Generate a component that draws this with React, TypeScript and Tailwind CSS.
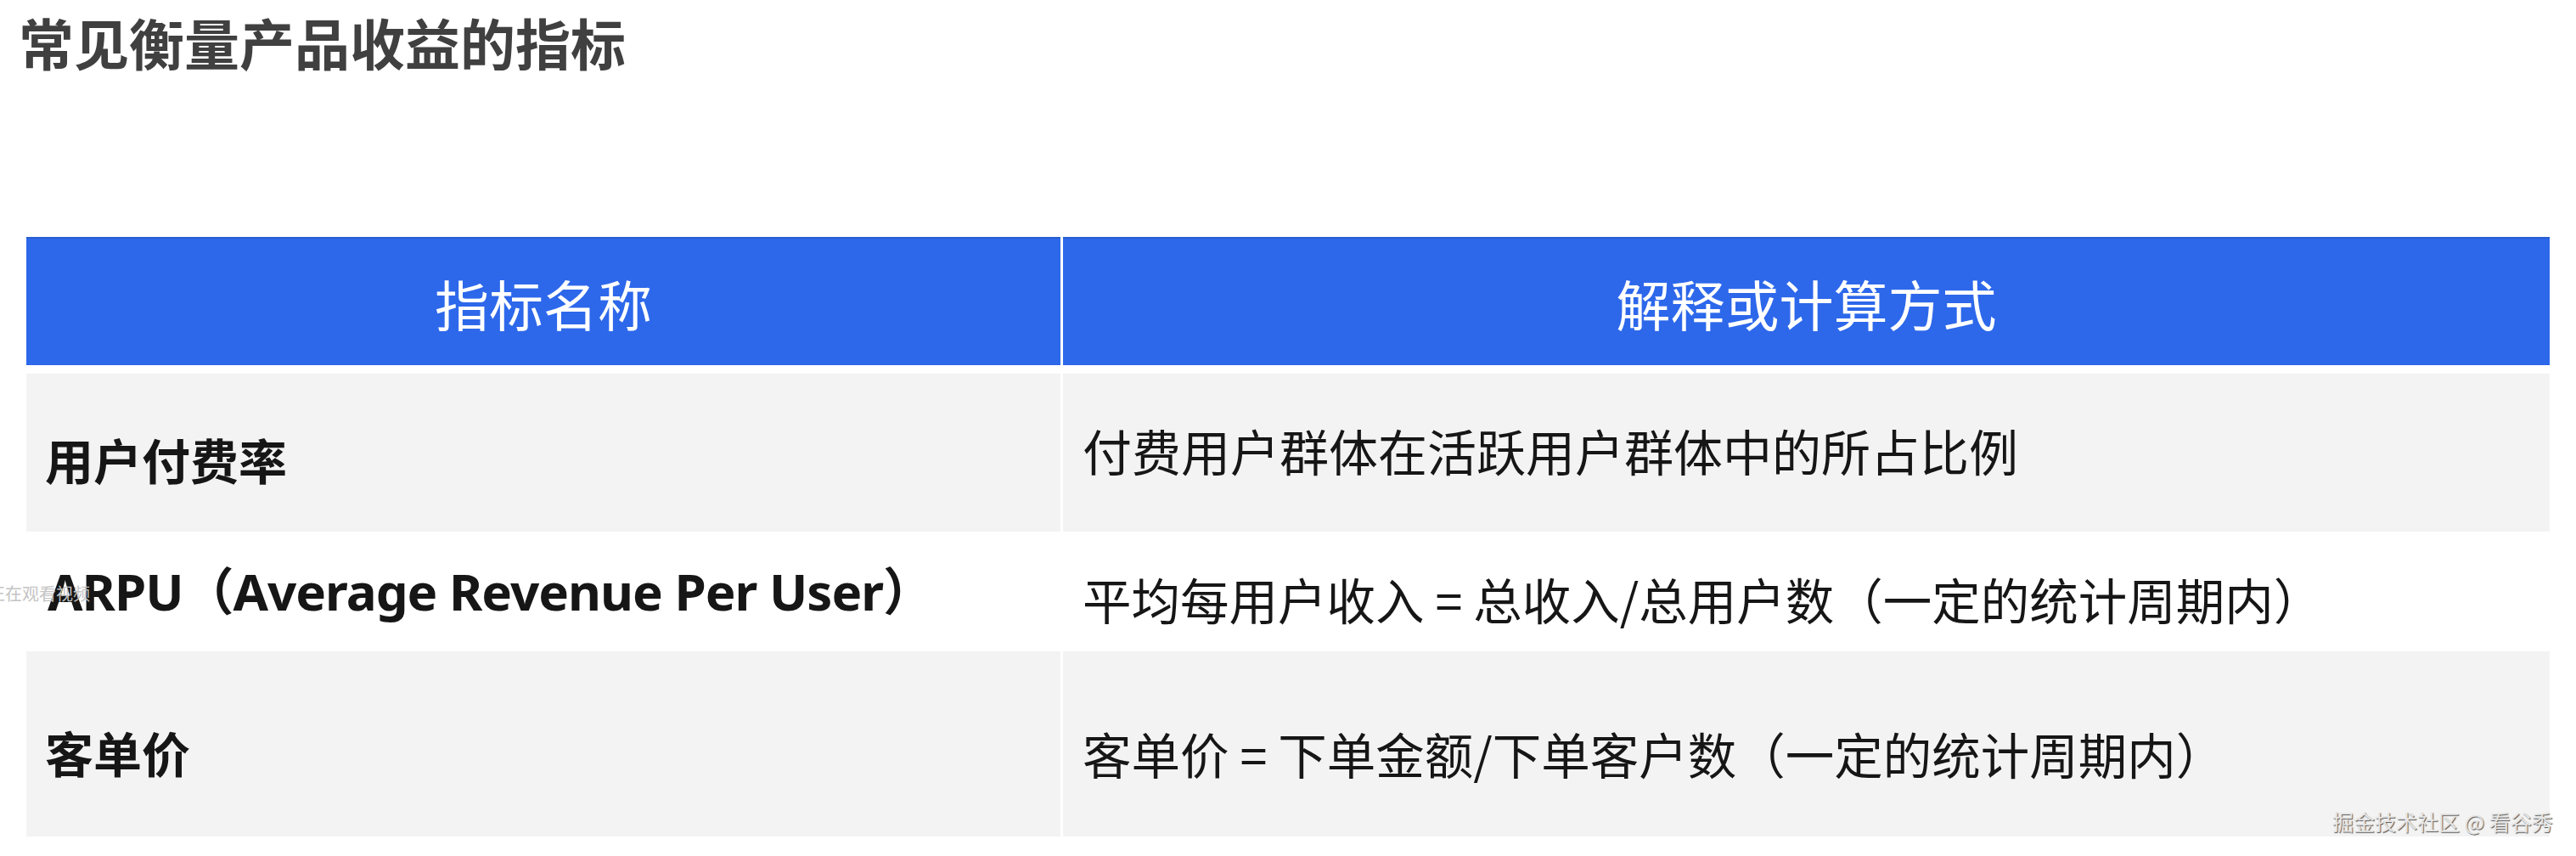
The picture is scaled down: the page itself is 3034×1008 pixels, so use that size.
const cjk = '"Noto Sans CJK SC", sans-serif';

type Row = {
  name: string;
  desc: string;
  bg: string;
  h: string;
  namePt: string;
  descPt: string;
  latin?: boolean;
};

const rows: Row[] = [
  {
    name: "用户付费率",
    desc: "付费用户群体在活跃用户群体中的所占比例",
    bg: "bg-[#f3f3f3]",
    h: "h-[186px]",
    namePt: "pt-[72px]",
    descPt: "pt-[61px] text-[58px]",
  },
  {
    name: "ARPU（Average Revenue Per User）",
    desc: "平均每用户收入 = 总收入/总用户数（一定的统计周期内）",
    bg: "bg-white",
    h: "h-[141px]",
    namePt: "pt-[40px]",
    descPt: "pt-[51px] text-[57.5px]",
    latin: true,
  },
  {
    name: "客单价",
    desc: "客单价 = 下单金额/下单客户数（一定的统计周期内）",
    bg: "bg-[#f3f3f3]",
    h: "h-[218px]",
    namePt: "pt-[90px]",
    descPt: "pt-[92px] text-[57.5px]",
  },
];

export default function App() {
  return (
    <div
      className="relative w-[3034px] h-[1008px] overflow-hidden bg-white"
      style={{ fontFamily: cjk }}
    >
      {/* Title */}
      <h1 className="ml-[22px] mt-[17px] text-[65px] font-bold leading-none text-[#404040]">
        常见衡量产品收益的指标
      </h1>

      {/* Table */}
      <div className="mx-[31px] mt-[197px]">
        <div className="grid grid-cols-[1218px_1fr] gap-x-[3px]">
          <div className="h-[151px] bg-[#2d68eb] border-t-2 border-[#2a5fcf] flex items-center justify-center text-[64px] leading-none text-white">
            指标名称
          </div>
          <div className="h-[151px] bg-[#2d68eb] border-t-2 border-[#2a5fcf] flex items-center justify-center text-[64px] leading-none text-white">
            解释或计算方式
          </div>
        </div>

        <div className="mt-[10px] flex flex-col">
          {rows.map((r) => (
            <div key={r.name} className="grid grid-cols-[1218px_1fr] gap-x-[3px]">
              <div
                className={`${r.bg} ${r.h} ${r.namePt} ${r.latin ? "pl-[25px] text-[60px] tracking-[-1px]" : "pl-[22px] text-[57px]"} font-bold leading-none text-[#161616] whitespace-nowrap`}
                style={r.latin ? { fontFamily: '"Noto Sans", "Noto Sans CJK SC", sans-serif' } : undefined}
              >
                {r.name}
              </div>
              <div className={`${r.bg} ${r.h} ${r.descPt} pl-[23px] leading-none text-[#161616] whitespace-nowrap`}>
                {r.desc}
              </div>
            </div>
          ))}
        </div>
      </div>

      {/* overlays */}
      <div className="absolute left-[-14px] top-[689px] text-[20px] leading-none text-[#c4c4c4] whitespace-nowrap">
        正在观看视频
      </div>
      <div className="absolute left-[2747px] top-[955px] text-[25px] leading-none text-[#e6e6e6] whitespace-nowrap [text-shadow:1px_1px_1px_#555]">
        掘金技术社区 @ 看谷秀
      </div>
    </div>
  );
}
